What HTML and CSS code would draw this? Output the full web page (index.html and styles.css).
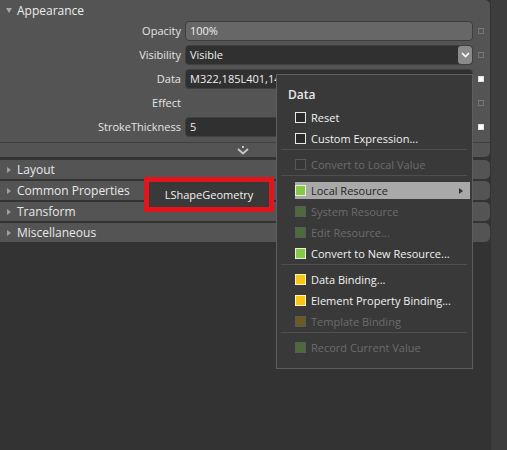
FILE: index.html
```html
<!DOCTYPE html>
<html>
<head>
<meta charset="utf-8">
<link rel="stylesheet" href="styles.css">
</head>
<body>
<div class="app">
  <div class="main">
    <section class="panel">
      <div class="hdr"><span class="tri-down"></span>Appearance</div>
      <div class="props">
        <div class="lbl">Opacity</div><div class="inp light">100%</div><span class="mk"></span>
        <div class="lbl">Visibility</div><div class="inp dark sel"><span>Visible</span><span class="dd"><svg width="9" height="6" viewBox="0 0 9 6"><path d="M1 1 L4.5 4.5 L8 1" fill="none" stroke="#fff" stroke-width="1.6"/></svg></span></div><span class="mk"></span>
        <div class="lbl">Data</div><div class="inp dark">M322,185L401,145L480,185L480,300</div><span class="mk on"></span>
        <div class="lbl">Effect</div><div class="empty"></div><span class="mk"></span>
        <div class="lbl">StrokeThickness</div><div class="inp dark">5</div><span class="mk on"></span>
      </div>
      <div class="more"><svg width="12" height="9" viewBox="0 0 12 9"><rect x="5" y="0" width="2" height="2" fill="#c8c8c8"/><path d="M1 3 L6 7.5 L11 3" fill="none" stroke="#c8c8c8" stroke-width="1.8"/></svg></div>
    </section>
    <div class="cat first"><span class="tri-right"></span>Layout</div>
    <div class="cat"><span class="tri-right"></span>Common Properties</div>
    <div class="cat"><span class="tri-right"></span>Transform</div>
    <div class="cat"><span class="tri-right"></span>Miscellaneous</div>
  </div>
  <div class="strip"></div>
</div>

<div class="tip"><div class="tip-in">LShapeGeometry</div></div>

<div class="menu">
  <div class="mtitle">Data</div>
  <div class="mi"><span class="cb white"></span>Reset</div>
  <div class="mi"><span class="cb white"></span>Custom Expression...</div>
  <div class="sep"></div>
  <div class="mi dis"><span class="cb gray"></span>Convert to Local Value</div>
  <div class="sep"></div>
  <div class="mi hl"><span class="cb green"></span>Local Resource<span class="sub"></span></div>
  <div class="mi dis"><span class="cb dgreen"></span>System Resource</div>
  <div class="mi dis"><span class="cb dgreen"></span>Edit Resource...</div>
  <div class="mi"><span class="cb green"></span>Convert to New Resource...</div>
  <div class="sep"></div>
  <div class="mi"><span class="cb yellow"></span>Data Binding...</div>
  <div class="mi"><span class="cb yellow"></span>Element Property Binding...</div>
  <div class="mi dis"><span class="cb dyellow"></span>Template Binding</div>
  <div class="sep"></div>
  <div class="mi dis"><span class="cb dgreen"></span>Record Current Value</div>
</div>
</body>
</html>
```

FILE: styles.css
```css
* { box-sizing: border-box; }
html, body { margin: 0; padding: 0; }
body {
  background: #333333;
  width: 507px;
  height: 450px;
  overflow: hidden;
  font-family: "Open Sans", "Noto Sans", sans-serif;
  font-size: 11px;
  color: #e6e6e6;
}
.app { display: flex; height: 450px; }
.main { width: 491px; padding-right: 1px; display: flex; flex-direction: column; }
.strip { flex: 1; background: #3d3d3d; }

.panel {
  background: #545454;
  border-radius: 0 5px 5px 0;
}
.hdr {
  height: 21px;
  display: flex;
  align-items: center;
  font-size: 12px;
  color: #ececec;
}
.tri-down {
  width: 0; height: 0;
  margin: 0 5px 0 6px;
  border-left: 3px solid transparent;
  border-right: 3px solid transparent;
  border-top: 5px solid #a8a8a8;
}
.props {
  display: grid;
  grid-template-columns: 181px 288px 6px;
  grid-auto-rows: 20px;
  column-gap: 4px;
  row-gap: 4px;
  align-items: center;
  padding-bottom: 5px;
}
.lbl { text-align: right; line-height: 20px; color: #e4e4e4; }
.inp {
  height: 20px;
  border-radius: 4px;
  padding: 0 4px;
  line-height: 18px;
  white-space: nowrap;
  overflow: hidden;
  color: #eeeeee;
}
.inp.light { background: #676767; border: 1px solid #3e3e3e; }
.inp.dark { background: #303030; border: 1px solid #404040; }
.sel { display: flex; justify-content: space-between; align-items: center; padding-right: 0; }
.dd {
  width: 14px; height: 18px;
  background: #8a8a8a;
  border-radius: 3px;
  display: flex; align-items: center; justify-content: center;
}
.mk {
  width: 6px; height: 6px;
  margin-left: 1px;
  border: 1px solid #767676;
}
.mk.on { background: #ffffff; border-color: #e0e0e0; }
.more {
  border-top: 1px solid #3f3f3f;
  height: 15px;
  padding-left: 237px;
  padding-top: 3px;
}
.more svg { display: block; }

.cat {
  height: 19px;
  margin-top: 2px;
  background: #545454;
  border-radius: 0 5px 5px 0;
  display: flex;
  align-items: center;
  color: #e8e8e8;
  font-size: 12px;
}
.cat.first { margin-top: 3px; }
.tri-right {
  width: 0; height: 0;
  margin: 0 6px 0 7px;
  border-top: 3.5px solid transparent;
  border-bottom: 3.5px solid transparent;
  border-left: 4px solid #a0a0a0;
}

.tip {
  position: absolute;
  left: 144px; top: 177px;
  width: 130px; height: 35px;
  border: 5px solid #e2141c;
  background: #393939;
}
.tip-in {
  height: 100%;
  display: flex; align-items: center; justify-content: center;
  color: #f2f2f2;
  font-size: 11px;
}

.menu {
  position: absolute;
  left: 276px; top: 74px;
  width: 197px; height: 295px;
  background: #393939;
  border: 1px solid #5e5e5e;
  padding-bottom: 10px;
}
.mtitle {
  padding: 12px 0 4px 11px;
  line-height: 16px;
  font-size: 12px;
  font-weight: 600;
  color: #e8e8e8;
}
.mi {
  height: 21px;
  margin-right: 2px;
  padding: 2px 0 2px 18px;
  background-clip: content-box;
  display: flex;
  align-items: center;
  color: #f2f2f2;
  white-space: nowrap;
}
.mi.dis { color: #6c6c6c; }
.mi.hl { background-color: #a9a9a9; color: #262626; }
.cb {
  width: 11px; height: 11px;
  margin-right: 5px;
  flex: none;
}
.cb.white { border: 1px solid #e8e8e8; background: #2a2a2a; }
.cb.gray { border: 1px solid #575757; background: #363636; }
.cb.green { border: 1px solid #e6f0dc; background: #86c94a; }
.cb.dgreen { border: 1px solid #5a5a5a; background: #4c6a3c; }
.cb.yellow { border: 1px solid #fff4c0; background: #f7c616; }
.cb.dyellow { border: 1px solid #5c5a50; background: #6b5a24; }
.sub {
  margin-left: auto;
  margin-right: 7px;
  width: 0; height: 0;
  border-top: 3.5px solid transparent;
  border-bottom: 3.5px solid transparent;
  border-left: 4px solid #303030;
}
.sep {
  height: 1px;
  margin: 0 5px 4px 4px;
  background: #4f4f4f;
}
```
